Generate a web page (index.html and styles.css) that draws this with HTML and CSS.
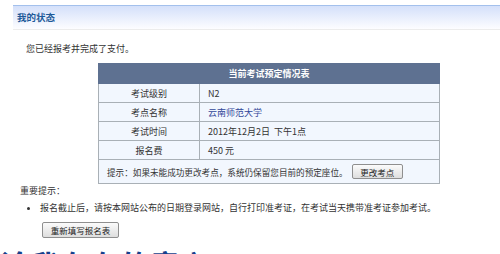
FILE: index.html
```html
<!DOCTYPE html>
<html lang="zh-CN">

<head>
    <meta charset="UTF-8">
    <meta name="viewport" content="width=device-width, initial-scale=1.0">
    <title>我的状态</title>
    <link rel="stylesheet" href="styles.css">
</head>

<body>
    <div class="status_bar">我的状态</div>

    <p class="paid_msg">您已经报考并完成了支付。</p>

    <table class="exam_table">
        <thead>
            <tr>
                <td colspan="2">当前考试预定情况表</td>
            </tr>
        </thead>
        <tbody>
            <tr>
                <td class="label">考试级别</td>
                <td>N2</td>
            </tr>
            <tr>
                <td class="label">考点名称</td>
                <td class="site">云南师范大学</td>
            </tr>
            <tr>
                <td class="label">考试时间</td>
                <td>2012年12月2日&nbsp; 下午1点</td>
            </tr>
            <tr>
                <td class="label">报名费</td>
                <td>450 元</td>
            </tr>
            <tr class="tip_row">
                <td colspan="2">提示：如果未能成功更改考点，系统仍保留您目前的预定座位。<button class="btn">更改考点</button></td>
            </tr>
        </tbody>
    </table>

    <p class="notice_title">重要提示：</p>
    <ul class="notice_list">
        <li>报名截止后，请按本网站公布的日期登录网站，自行打印准考证，在考试当天携带准考证参加考试。</li>
    </ul>

    <div class="redo_bar">
        <button class="btn">重新填写报名表</button>
    </div>

    <h2 class="big_title">论我存在的意义</h2>
</body>

</html>
```

FILE: styles.css
```css
* {
    margin: 0;
    padding: 0;
}

body {
    font-family: "Noto Sans CJK SC", "Liberation Sans", sans-serif;
    font-size: 9px;
    color: #333;
    overflow: hidden;
}

.status_bar {
    box-sizing: border-box;
    height: 25px;
    margin: 5px 0 0 13px;
    padding-left: 4px;
    line-height: 23px;
    font-size: 9.5px;
    font-weight: bold;
    color: #1e5a99;
    border-top: 1px solid #a3c0ec;
    border-bottom: 1px solid #ececec;
    background: linear-gradient(#d4e0fa, #fdfdff);
}

.paid_msg {
    margin: 13px 0 0 26px;
    line-height: 12px;
}

.exam_table {
    width: 342px;
    margin: 8px 0 0 98px;
    border-collapse: collapse;
    border: 1px solid #4d6f72;
    background-color: #f2f7fe;
}

.exam_table td {
    height: 18px;
    padding: 0 8px;
    border: 1px solid #a9b0b6;
}

.exam_table thead td {
    height: 19px;
    text-align: center;
    font-weight: bold;
    color: #fff;
    background-color: #5e7191;
    border-color: #5e7191;
}

.exam_table .label {
    width: 84px;
    text-align: center;
}

.exam_table .site {
    color: #33479a;
}

.exam_table .tip_row td {
    height: 23px;
    padding-left: 8px;
    font-size: 8.6px;
}

.btn {
    box-sizing: border-box;
    height: 15px;
    padding: 0 12px;
    font-family: inherit;
    font-size: 8.5px;
    color: #222;
    border: 1px solid #8f8f8f;
    border-radius: 2px;
    background: linear-gradient(#fbfbfb, #dedede);
}

.tip_row .btn {
    width: 51px;
    margin-left: 4px;
    padding: 0;
}

.notice_title {
    margin: 1px 0 0 20px;
    line-height: 12px;
}

.notice_list {
    margin: 5px 0 0 40px;
    line-height: 12px;
}

.redo_bar {
    margin: 8px 0 0 42px;
}

.redo_bar .btn {
    width: 77px;
    height: 16px;
    padding: 0;
}

.big_title {
    margin-top: 9px;
    font-size: 30px;
    line-height: 34px;
    font-weight: bold;
    color: #15408c;
    white-space: nowrap;
}
```
